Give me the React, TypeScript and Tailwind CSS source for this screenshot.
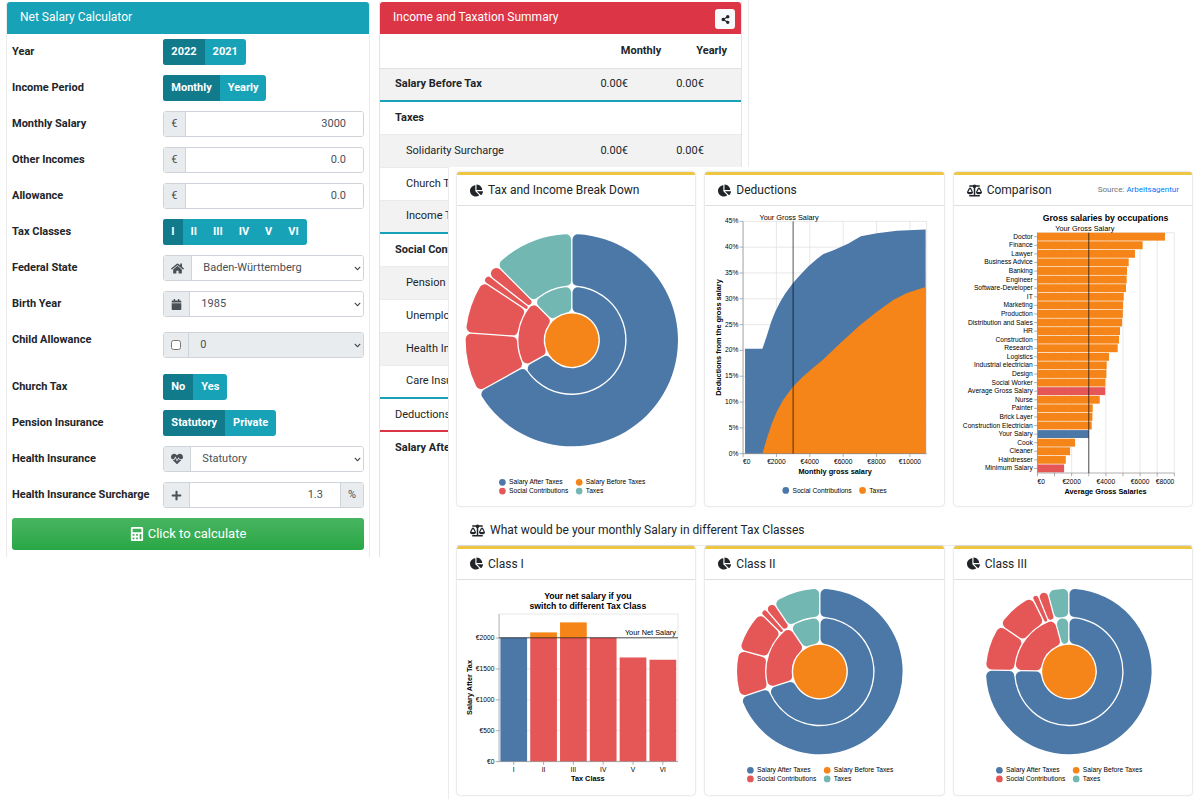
import { useId, useState } from 'react'
import type { ReactNode } from 'react'
import {
  FaBalanceScale,
  FaCalculator,
  FaCalendar,
  FaChartPie,
  FaChevronDown,
  FaHeartbeat,
  FaHome,
  FaPlus,
  FaShareAlt
} from 'react-icons/fa'

const BLUE = '#4c78a8'
const ORANGE = '#f58518'
const RED = '#e45756'
const TEAL = '#72b7b2'

/* ---------- Calculator form ---------- */

function Row({ label, id, children, className = 'items-center mb-[10px]' }: {
  label: string
  id: string
  children: ReactNode
  className?: string
}) {
  return (
    <div className={`flex ${className}`}>
      <label htmlFor={id} className="w-[43%] shrink-0 text-[11px] leading-4 font-bold text-[#212529]">
        {label}
      </label>
      <div className="flex min-w-0 flex-1">{children}</div>
    </div>
  )
}

function ToggleGroup({ label, options }: { label: string; options: string[] }) {
  const id = useId()
  const [active, setActive] = useState(options[0])
  return (
    <Row label={label} id={id}>
      <div className="flex h-[26px] overflow-hidden rounded-[3px] bg-[#17a2b8]">
        {options.map((option, i) => (
          <button
            key={option}
            id={i === 0 ? id : undefined}
            type="button"
            aria-pressed={option === active}
            onClick={() => setActive(option)}
            className={`px-2 text-[11px] leading-4 font-bold text-white ${option === active ? 'bg-[#117a8b]' : ''}`}
          >
            {option}
          </button>
        ))}
      </div>
    </Row>
  )
}

function Addon({ children, end = false }: { children: ReactNode; end?: boolean }) {
  return (
    <span
      className={`flex shrink-0 items-center bg-[#e9ecef] px-[7px] text-[11px] text-[#495057] border-[#ced4da] ${
        end ? 'border-l' : 'border-r'
      }`}
    >
      {children}
    </span>
  )
}

function NumberRow({ label, value, icon, suffix }: {
  label: string
  value: string
  icon: ReactNode
  suffix?: string
}) {
  const id = useId()
  return (
    <Row label={label} id={id}>
      <div className="flex h-[26px] w-full overflow-hidden rounded-[3px] border border-[#ced4da]">
        <Addon>{icon}</Addon>
        <input
          id={id}
          defaultValue={value}
          className="min-w-0 flex-1 bg-white pr-[17px] text-right text-[11px] text-[#495057] outline-none"
        />
        {suffix && <Addon end>{suffix}</Addon>}
      </div>
    </Row>
  )
}

function SelectRow({ label, value, icon, disabled = false, className }: {
  label: string
  value: string
  icon: ReactNode
  disabled?: boolean
  className?: string
}) {
  const id = useId()
  return (
    <Row label={label} id={id} className={className}>
      <div className="flex h-[26px] w-full overflow-hidden rounded-[3px] border border-[#ced4da]">
        <Addon>{icon}</Addon>
        <div className="relative flex min-w-0 flex-1">
          <select
            id={id}
            disabled={disabled}
            className={`w-full appearance-none pl-[11px] text-[11px] text-[#495057] opacity-100 outline-none ${
              disabled ? 'bg-[#e9ecef]' : 'bg-white'
            }`}
          >
            <option>{value}</option>
          </select>
          <FaChevronDown className="pointer-events-none absolute top-[9px] right-[2px] size-[7px] text-[#343a40]" />
        </div>
      </div>
    </Row>
  )
}

function Calculator() {
  return (
    <section className="border-x border-[#ececec]">
      <h2 className="h-8 rounded-t-[3px] bg-[#17a2b8] px-[13px] pt-[6px] text-[12px] leading-[18px] text-white">
        Net Salary Calculator
      </h2>
      <form className="px-[5px] pt-[5px] pb-[7px]" onSubmit={(e) => e.preventDefault()}>
        <ToggleGroup label="Year" options={['2022', '2021']} />
        <ToggleGroup label="Income Period" options={['Monthly', 'Yearly']} />
        <NumberRow label="Monthly Salary" value="3000" icon="€" />
        <NumberRow label="Other Incomes" value="0.0" icon="€" />
        <NumberRow label="Allowance" value="0.0" icon="€" />
        <ToggleGroup label="Tax Classes" options={['I', 'II', 'III', 'IV', 'V', 'VI']} />
        <SelectRow label="Federal State" value="Baden-Württemberg" icon={<FaHome className="size-[13px]" />} />
        <SelectRow label="Birth Year" value="1985" icon={<FaCalendar className="size-[11px]" />} />
        <SelectRow
          label="Child Allowance"
          value="0"
          disabled
          className="mt-[15px] mb-4 items-start"
          icon={<input type="checkbox" aria-label="Has children" className="size-[10px]" />}
        />
        <ToggleGroup label="Church Tax" options={['No', 'Yes']} />
        <ToggleGroup label="Pension Insurance" options={['Statutory', 'Private']} />
        <SelectRow label="Health Insurance" value="Statutory" icon={<FaHeartbeat className="size-3" />} />
        <NumberRow
          label="Health Insurance Surcharge"
          value="1.3"
          icon={<FaPlus className="size-[11px]" />}
          suffix="%"
        />
        <button
          type="submit"
          className="flex h-8 w-full items-center justify-center gap-1 rounded-[3px] bg-linear-to-b from-[#48b461] to-[#28a745] text-[13px] text-white"
        >
          <FaCalculator className="size-[14px]" />
          Click to calculate
        </button>
      </form>
    </section>
  )
}

/* ---------- Summary table ---------- */

type SummaryRow = { name: string; kind?: 'head' | 'sub'; value?: string; line?: string }

const SUMMARY: SummaryRow[] = [
  { name: 'Salary Before Tax', kind: 'head', value: '0.00€', line: 'border-b-2 border-[#17a2b8]' },
  { name: 'Taxes', kind: 'head' },
  { name: 'Solidarity Surcharge', kind: 'sub', value: '0.00€' },
  { name: 'Church Tax', kind: 'sub' },
  { name: 'Income Tax', kind: 'sub', line: 'border-b-2 border-[#17a2b8]' },
  { name: 'Social Contributions', kind: 'head' },
  { name: 'Pension', kind: 'sub' },
  { name: 'Unemployment', kind: 'sub' },
  { name: 'Health Insurance', kind: 'sub' },
  { name: 'Care Insurance', kind: 'sub', line: 'border-b-2 border-[#17a2b8]' },
  { name: 'Deductions', line: 'border-b-2 border-[#dc3545]' },
  { name: 'Salary After Tax', kind: 'head', line: 'border-b-0' }
]

function Summary() {
  return (
    <section className="mr-[6px] ml-[3px] h-full border-x border-[#e4e4e4]">
      <header className="flex h-8 items-start justify-between rounded-t-[3px] bg-[#dc3545] pt-[7px] pr-[6px] pl-[13px]">
        <h2 className="text-[12px] leading-4 text-white">Income and Taxation Summary</h2>
        <button
          type="button"
          aria-label="Share"
          className="flex size-5 items-center justify-center rounded-[3px] bg-[#f8f9fa] text-[#212529]"
        >
          <FaShareAlt className="size-[9px]" />
        </button>
      </header>
      <table className="w-full table-fixed border-collapse text-[11px] leading-4 text-[#212529]">
        <thead>
          <tr className="h-[34px] border-b border-[#dee2e6]">
            <td className="w-[58%]" />
            <th scope="col" className="w-[21%] pr-1 text-right font-bold">Monthly</th>
            <th scope="col" className="w-[21%] pr-[14px] text-right font-bold">Yearly</th>
          </tr>
        </thead>
        <tbody>
          {SUMMARY.map((row, i) => (
            <tr
              key={row.name}
              className={`h-[33px] ${i % 2 === 0 && i < 11 && row.name !== 'Deductions' ? 'bg-[#f2f2f2]' : ''} ${
                row.line ?? 'border-b border-[#e9ecef]'
              }`}
            >
              <th
                scope="row"
                className={`text-left whitespace-nowrap ${row.kind === 'sub' ? 'pl-[26px]' : 'pl-[15px]'} ${
                  row.kind === 'head' ? 'font-bold' : 'font-normal'
                }`}
              >
                {row.name}
              </th>
              <td className="pl-[11px]">{row.value}</td>
              <td className="pl-[11px]">{row.value}</td>
            </tr>
          ))}
        </tbody>
      </table>
    </section>
  )
}

/* ---------- Charts ---------- */

type Slice = { angle: number; color: string }

// Ring segment with rounded corners, angles clockwise from 12 o'clock
function segmentPath(r: number, R: number, from: number, to: number) {
  const pad = 1
  const corner = 8
  const a = (from * Math.PI) / 180
  const b = (to * Math.PI) / 180
  const half = (b - a) / 2
  const s = half < Math.PI / 2 ? Math.sin(half) : 1
  const co = Math.max(0, Math.min(corner, (R * s - pad) / (1 + s)))
  const ci = Math.max(0, s < 1 ? Math.min(corner, (r * s - pad) / (1 - s)) : corner)

  // side: +1 for the leading edge, -1 for the trailing one
  const onArc = (radius: number, c: number, dist: number, angle: number, side: number) => {
    const t = angle + side * Math.asin(Math.min(1, (pad + c) / dist))
    return `${radius * Math.sin(t)} ${-radius * Math.cos(t)}`
  }
  const onSide = (c: number, dist: number, angle: number, side: number) => {
    const along = Math.sqrt(Math.max(0, dist * dist - (pad + c) * (pad + c)))
    const x = along * Math.sin(angle) + side * pad * Math.cos(angle)
    const y = -along * Math.cos(angle) + side * pad * Math.sin(angle)
    return `${x} ${y}`
  }
  const large = b - a > Math.PI ? 1 : 0

  return [
    `M${onSide(co, R - co, a, 1)}`,
    `A${co} ${co} 0 0 1 ${onArc(R, co, R - co, a, 1)}`,
    `A${R} ${R} 0 ${large} 1 ${onArc(R, co, R - co, b, -1)}`,
    `A${co} ${co} 0 0 1 ${onSide(co, R - co, b, -1)}`,
    `L${onSide(ci, r + ci, b, -1)}`,
    `A${ci} ${ci} 0 0 1 ${onArc(r, ci, r + ci, b, -1)}`,
    `A${r} ${r} 0 ${large} 0 ${onArc(r, ci, r + ci, a, 1)}`,
    `A${ci} ${ci} 0 0 1 ${onSide(ci, r + ci, a, 1)}`,
    'Z'
  ].join(' ')
}

function Ring({ inner, outer, slices }: { inner: number; outer: number; slices: Slice[] }) {
  let start = 0
  return (
    <>
      {slices.map((slice, i) => {
        const from = start
        start += slice.angle
        return <path key={i} d={segmentPath(inner, outer, from, start)} fill={slice.color} />
      })}
    </>
  )
}

const LEGEND = [
  { label: 'Salary After Taxes', color: BLUE, x: 68, row: 0 },
  { label: 'Salary Before Taxes', color: ORANGE, x: 183, row: 0 },
  { label: 'Social Contributions', color: RED, x: 68, row: 1 },
  { label: 'Taxes', color: TEAL, x: 183, row: 1 }
]

// Chart units are 1.5 to a pixel in a card of the usual width
function Sunburst({ net, radius, cy, height, legendY }: {
  net: number
  radius: number
  cy: number
  height: number
  legendY: number
}) {
  const social = [33, 29.5, 4.5, 7]
  const socialSum = 74
  const tax = 360 - net - socialSum
  return (
    <svg viewBox={`0 0 357 ${height}`} className="w-full" role="img" aria-label="Salary break down">
      <g transform={`translate(172 ${cy})`}>
        <circle r="40" fill={ORANGE} />
        <Ring
          inner={42}
          outer={80}
          slices={[
            { angle: net, color: BLUE },
            { angle: socialSum, color: RED },
            { angle: tax, color: TEAL }
          ]}
        />
        <Ring
          inner={82}
          outer={radius}
          slices={[
            { angle: net, color: BLUE },
            ...social.map((angle) => ({ angle, color: RED })),
            { angle: tax, color: TEAL }
          ]}
        />
      </g>
      <g className="font-['Liberation_Sans',sans-serif] text-[10px]">
        {LEGEND.map((item) => (
          <g key={item.label}>
            <circle cx={item.x} cy={legendY + item.row * 13} r="5" fill={item.color} />
            <text x={item.x + 10} y={legendY + 3 + item.row * 13}>{item.label}</text>
          </g>
        ))}
      </g>
    </svg>
  )
}

// [gross salary, percent]
const TOTAL_DEDUCTIONS = [
  [120, 20.3], [1160, 20.3], [1420, 22.8], [1680, 25.5], [1940, 27.6], [2220, 29.4], [2520, 31],
  [2980, 33], [3420, 34.6], [3920, 36.3], [4420, 37.7], [4820, 38.7], [5420, 39.4], [6320, 40.7],
  [6720, 41.5], [7060, 42.1], [8020, 42.7], [9220, 43.2], [10940, 43.4]
]
const TAX_DEDUCTIONS = [
  [1160, 0], [1420, 2.9], [1720, 5.8], [2020, 8.1], [2420, 10.5], [2980, 12.9], [3520, 14.7],
  [4220, 16.7], [4820, 18.3], [5820, 21.4], [7020, 24.9], [8020, 27.5], [9020, 29.8],
  [9820, 31.1], [10940, 32.3]
]

function DeductionsChart() {
  const x = (euro: number) => 57 + euro / 40
  const y = (pct: number) => 372 - (pct * 348) / 45
  const area = (data: number[][]) =>
    `M${x(data[0][0])} ${y(0)} ${data.map(([e, p]) => `L${x(e)} ${y(p)}`).join(' ')} L${x(10940)} ${y(0)}Z`
  const percents = [0, 5, 10, 15, 20, 25, 30, 35, 40, 45]
  const euros = [0, 2000, 4000, 6000, 8000, 10000]
  return (
    <svg
      viewBox="0 1 357 449"
      className="w-full font-['Liberation_Sans',sans-serif] text-[10px]"
      role="img"
      aria-label="Deductions by gross salary"
    >
      {percents.map((p) => (
        <g key={p}>
          <path d={`M57 ${y(p)}H332`} stroke="#ddd" />
          <path d={`M52 ${y(p)}H57`} stroke="#888" />
          <text x="50" y={y(p) + 3} textAnchor="end">{p}%</text>
        </g>
      ))}
      {euros.map((e) => (
        <g key={e}>
          <path d={`M${x(e)} 24V372`} stroke="#ddd" />
          <path d={`M${x(e)} 372V377`} stroke="#888" />
          <text x={x(e)} y="387" textAnchor={e === 0 ? 'start' : 'middle'}>€{e}</text>
        </g>
      ))}
      <path d="M332 24V372" stroke="#ddd" />
      <path d={area(TOTAL_DEDUCTIONS)} fill={BLUE} />
      <path d={area(TAX_DEDUCTIONS)} fill={ORANGE} />
      <path d="M57 24V372H332" fill="none" stroke="#888" />
      <path d={`M${x(3000)} 24V372`} stroke="#000" />
      <g className="text-[11px]">
        <text x="126" y="22" textAnchor="middle">Your Gross Salary</text>
        <text x="195" y="402" textAnchor="middle" fontWeight="bold">Monthly gross salary</text>
        <text x="-198" y="24" textAnchor="middle" fontWeight="bold" transform="rotate(-90)">
          Deductions from the gross salary
        </text>
      </g>
      <circle cx="121" cy="427" r="5" fill={BLUE} />
      <text x="131" y="431">Social Contributions</text>
      <circle cx="236" cy="427" r="5" fill={ORANGE} />
      <text x="246" y="431">Taxes</text>
    </svg>
  )
}

const OCCUPATIONS: [string, number][] = [
  ['Doctor', 7455],
  ['Finance', 6150],
  ['Lawyer', 5700],
  ['Business Advice', 5333],
  ['Banking', 5236],
  ['Engineer', 5216],
  ['Software-Developer', 5178],
  ['IT', 5041],
  ['Marketing', 5002],
  ['Production', 4990],
  ['Distribution and Sales', 4950],
  ['HR', 4827],
  ['Construction', 4769],
  ['Research', 4691],
  ['Logistics', 4185],
  ['Industrial electrician', 4049],
  ['Design', 4030],
  ['Social Worker', 3971],
  ['Average Gross Salary', 3960],
  ['Nurse', 3640],
  ['Painter', 3231],
  ['Brick Layer', 3212],
  ['Construction Electrician', 3173],
  ['Your Salary', 3000],
  ['Cook', 2200],
  ['Cleaner', 1907],
  ['Hairdresser', 1655],
  ['Minimum Salary', 1557]
]

function barColor(name: string) {
  if (name === 'Your Salary') return BLUE
  if (name === 'Average Gross Salary' || name === 'Minimum Salary') return RED
  return ORANGE
}

function ComparisonChart() {
  const x = (euro: number) => 127 + (euro * 205) / 8000
  const step = 360 / OCCUPATIONS.length
  return (
    <svg
      viewBox="2 0 357 449"
      className="w-full font-['Liberation_Sans',sans-serif] text-[10px]"
      role="img"
      aria-label="Gross salaries by occupations"
    >
      <text x="229" y="22" textAnchor="middle" className="text-[13px] font-bold">
        Gross salaries by occupations
      </text>
      <path d="M127 40H332" stroke="#ddd" />
      {[0, 1000, 2000, 3000, 4000, 5000, 6000, 7000, 8000].map((e) => (
        <g key={e}>
          <path d={`M${x(e)} 40V400`} stroke="#ddd" />
          <path d={`M${x(e)} 400V405`} stroke="#888" />
          {e % 2000 === 0 && (
            <text x={x(e)} y="416" textAnchor={e === 0 ? 'start' : e === 8000 ? 'end' : 'middle'}>€{e}</text>
          )}
        </g>
      ))}
      {OCCUPATIONS.map(([name, salary], i) => (
        <g key={name}>
          <rect x="127" y={40 + i * step} width={x(salary) - 127} height={step - 1} fill={barColor(name)} />
          <path d={`M122 ${46 + i * step}H127`} stroke="#888" />
          <text x="120" y={49 + i * step} textAnchor="end">{name}</text>
        </g>
      ))}
      <path d="M127 40V400H332" fill="none" stroke="#888" />
      <path d={`M${x(3000)} 40V400`} stroke="#000" />
      <text x="198" y="38" textAnchor="middle" className="text-[11px]">Your Gross Salary</text>
      <text x="229" y="431" textAnchor="middle" className="text-[11px] font-bold">Average Gross Salaries</text>
    </svg>
  )
}

const NET_BY_CLASS: [string, number][] = [
  ['I', 2005],
  ['II', 2092],
  ['III', 2254],
  ['IV', 2005],
  ['V', 1686],
  ['VI', 1649]
]
const OWN_NET = 2005

function TaxClassChart() {
  const y = (euro: number) => 272 - (euro * 185) / 2000
  return (
    <svg
      viewBox="0 0 357 323"
      className="w-full font-['Liberation_Sans',sans-serif] text-[10px]"
      role="img"
      aria-label="Net salary by tax class"
    >
      <g textAnchor="middle" className="text-[13px] font-bold">
        <text x="196" y="28">Your net salary if you</text>
        <text x="196" y="43">switch to different Tax Class</text>
      </g>
      <path d="M63 51H331V272" fill="none" stroke="#ddd" />
      {[0, 500, 1000, 1500, 2000].map((e) => (
        <g key={e}>
          <path d={`M63 ${y(e)}H331`} stroke="#ddd" />
          <path d={`M58 ${y(e)}H63`} stroke="#888" />
          <text x="56" y={y(e) + 3} textAnchor="end">€{e}</text>
        </g>
      ))}
      {NET_BY_CLASS.map(([name, net], i) => {
        const left = 65 + (i * 268) / 6
        return (
          <g key={name}>
            <rect
              x={left}
              y={y(Math.min(net, OWN_NET))}
              width="40"
              height={272 - y(Math.min(net, OWN_NET))}
              fill={i === 0 ? BLUE : RED}
            />
            {net > OWN_NET && (
              <rect x={left} y={y(net)} width="40" height={y(OWN_NET) - y(net)} fill={ORANGE} />
            )}
            <path d={`M${left + 20} 272V277`} stroke="#888" />
            <text x={left + 20} y="287" textAnchor="middle">{name}</text>
          </g>
        )
      })}
      <path d="M63 51V272H331" fill="none" stroke="#888" />
      <path d={`M63 ${y(OWN_NET)}H331`} stroke="#000" />
      <g className="text-[11px]">
        <text x="328" y="82" textAnchor="end">Your Net Salary</text>
        <text x="196" y="301" textAnchor="middle" fontWeight="bold">Tax Class</text>
        <text x="-161" y="23" textAnchor="middle" fontWeight="bold" transform="rotate(-90)">
          Salary After Tax
        </text>
      </g>
    </svg>
  )
}

function ChartCard({ title, icon, aside, children }: {
  title: string
  icon?: ReactNode
  aside?: ReactNode
  children: ReactNode
}) {
  return (
    <section className="rounded-[3px] border-t-[3px] border-[#eec643] bg-white shadow-[0_0_2px_rgba(0,0,0,0.3)]">
      <header className="flex h-[31px] items-center gap-[5px] border-b border-[#dfdfdf] px-[13px] text-[#212529]">
        {icon ?? <FaChartPie className="size-[13px]" />}
        <h3 className="text-[12px] leading-4">{title}</h3>
        {aside}
      </header>
      {children}
    </section>
  )
}

export default function App() {
  return (
    <main className="min-h-screen bg-white font-[Roboto,sans-serif]">
      <div className="grid grid-cols-[minmax(0,376fr)_minmax(0,72fr)_minmax(0,301fr)_minmax(0,451fr)] grid-rows-[167px_auto]">
        <div className="col-start-1 row-span-2 row-start-1 px-[6px] pt-[2px]">
          <Calculator />
        </div>
        <div className="col-span-2 col-start-2 row-span-2 row-start-1 h-[557px] overflow-hidden border-r border-[#ececec] pt-[2px]">
          <Summary />
        </div>

        {/* Charts panel stacked over the summary */}
        <div className="z-10 col-span-2 col-start-3 row-start-2 border-l border-[#ececec] bg-white px-2 pt-[5px] pb-1">
          <div className="grid grid-cols-3 gap-[10px]">
            <ChartCard title="Tax and Income Break Down">
              <Sunburst net={241} radius={159} cy={201} height={449} legendY={414} />
            </ChartCard>
            <ChartCard title="Deductions">
              <DeductionsChart />
            </ChartCard>
            <ChartCard
              title="Comparison"
              icon={<FaBalanceScale className="size-[15px]" />}
              aside={
                <p className="ml-auto text-[8px] text-[#6c757d]">
                  Source: <a href="#arbeitsagentur" className="text-[#007bff]">Arbeitsagentur</a>
                </p>
              }
            >
              <ComparisonChart />
            </ChartCard>
          </div>
          <h2 className="flex h-10 items-center gap-[5px] border-b border-[#ececec] px-[13px] pt-[10px] text-[12px] leading-4 text-[#212529]">
            <FaBalanceScale className="size-[15px]" />
            What would be your monthly Salary in different Tax Classes
          </h2>
          <div className="grid grid-cols-3 gap-[10px]">
            <ChartCard title="Class I">
              <TaxClassChart />
            </ChartCard>
            <ChartCard title="Class II">
              <Sunburst net={252} radius={124} cy={137} height={323} legendY={285} />
            </ChartCard>
            <ChartCard title="Class III">
              <Sunburst net={271} radius={124} cy={137} height={323} legendY={285} />
            </ChartCard>
          </div>
        </div>
      </div>
    </main>
  )
}
